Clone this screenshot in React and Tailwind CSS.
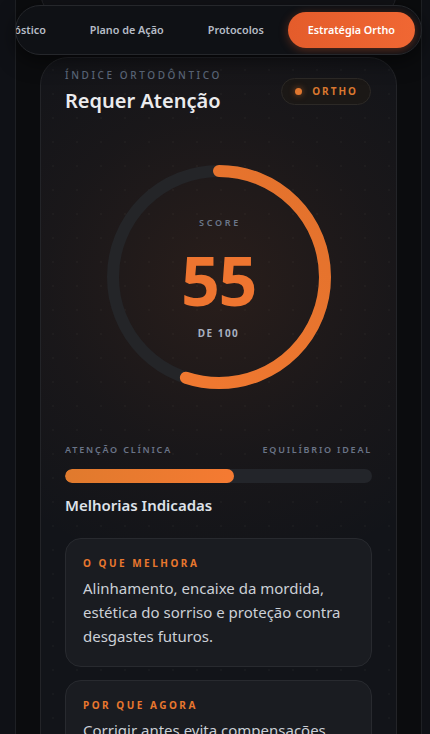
import { useState } from "react";

const tabs = ["Diagnóstico", "Plano de Ação", "Protocolos", "Estratégia Ortho"];

const insights = [
  {
    label: "O QUE MELHORA",
    text: "Alinhamento, encaixe da mordida, estética do sorriso e proteção contra desgastes futuros.",
  },
  {
    label: "POR QUE AGORA",
    text: "Corrigir antes evita compensações musculares, desgaste irregular e tratamentos mais longos no futuro.",
  },
];

function ScoreRing({ score }) {
  const r = 106;
  const c = 2 * Math.PI * r;
  return (
    <div className="relative w-[224px] h-[224px] mx-auto">
      <svg width="224" height="224" viewBox="0 0 224 224" className="-rotate-90">
        <defs>
          <linearGradient id="ring" x1="0" y1="0" x2="1" y2="1">
            <stop offset="0%" stopColor="#f37a31" />
            <stop offset="100%" stopColor="#e2712c" />
          </linearGradient>
        </defs>
        <circle cx="112" cy="112" r={r} fill="none" stroke="#242528" strokeWidth="12" />
        <circle
          cx="112"
          cy="112"
          r={r}
          fill="none"
          stroke="url(#ring)"
          strokeWidth="12"
          strokeLinecap="round"
          strokeDasharray={c}
          strokeDashoffset={c * (1 - score / 100)}
        />
      </svg>
      <div className="absolute inset-0 flex flex-col items-center justify-center">
        <span className="text-[9px] font-semibold tracking-[0.3em] text-[#6b778a] mt-[3px] ml-[3px]">SCORE</span>
        <span className="text-[68px] leading-none font-bold text-[#ee7530] tracking-[-0.02em] mt-[17px]">{score}</span>
        <span className="text-[10px] font-bold tracking-[0.15em] text-[#a7b1c0] mt-[12px]">DE 100</span>
      </div>
    </div>
  );
}

export default function App() {
  const [active, setActive] = useState(3);
  const score = 55;

  return (
    <div
      className="min-h-screen bg-[#0f1116] overflow-hidden"
      style={{ fontFamily: '"Noto Sans", "Open Sans", sans-serif' }}
    >
      <div className="relative flex flex-col ml-[15px] w-[407px] h-[734px] border-x border-[#1e2024] bg-[#0b0c0e] px-[24px]">
        {/* previous card, scrolled past */}
        <div className="mt-[-60px] h-[80px] shrink-0 rounded-b-[28px] border border-[#232428] bg-[#111216]" />

        {/* tab bar */}
        <div className="absolute top-[5px] left-[-1px] w-[407px] h-[50px] rounded-full border border-[#25272b] bg-[#0f1115] z-10 flex items-center justify-end overflow-hidden px-[6px] shadow-[0_6px_20px_rgba(0,0,0,0.5)]">
          <div className="flex items-center gap-[4px] shrink-0">
            {tabs.map((t, i) => (
              <button
                key={t}
                onClick={() => setActive(i)}
                className={
                  i === active
                    ? "shrink-0 h-[36px] px-[20px] rounded-full bg-gradient-to-r from-[#e45c2b] to-[#f06733] text-white text-[10.8px] font-semibold whitespace-nowrap shadow-[0_2px_10px_rgba(232,95,44,0.35)]"
                    : "shrink-0 h-[36px] px-[20px] rounded-full text-[#b6bcc6] text-[10.8px] font-semibold whitespace-nowrap"
                }
              >
                {t}
              </button>
            ))}
          </div>
        </div>

        {/* score card */}
        <div className="mt-[37px] shrink-0 rounded-[28px] border border-[#232428] bg-[#121419] bg-[radial-gradient(circle_at_50%_225px,rgba(230,110,40,0.11),rgba(230,110,40,0.035)_170px,transparent_300px),radial-gradient(rgba(255,255,255,0.025)_1px,transparent_1px)] bg-[size:auto,24px_24px] px-[24px] pt-[10px] pb-[30px]">
          <div className="flex items-start justify-between">
            <div>
              <p className="text-[10px] font-medium tracking-[0.26em] text-[#5c687a] leading-[14px]">ÍNDICE ORTODÔNTICO</p>
              <h2 className="mt-[6px] text-[20px] font-semibold text-[#ebebed] leading-[26px]">Requer Atenção</h2>
            </div>
            <div className="mt-[10px] mr-[1px] h-[27px] pl-[13px] pr-[12px] rounded-full border border-[#2c2926] bg-[#1b1816] flex items-center gap-[10px]">
              <span className="w-[7px] h-[7px] rounded-full bg-[#e0772f] shadow-[0_0_6px_rgba(224,119,47,0.6)]" />
              <span className="text-[10px] font-bold tracking-[0.2em] text-[#d9772f]">ORTHO</span>
            </div>
          </div>

          <div className="mt-[51px]">
            <ScoreRing score={score} />
          </div>

          <div className="mt-[54px] flex justify-between text-[9px] font-semibold tracking-[0.2em] text-[#6a7487]">
            <span>ATENÇÃO CLÍNICA</span>
            <span>EQUILÍBRIO IDEAL</span>
          </div>
          <div className="mt-[12px] h-[14px] rounded-full bg-[#23252a] overflow-hidden">
            <div
              className="h-full rounded-full bg-gradient-to-r from-[#e07a2d] to-[#f57a32]"
              style={{ width: `${score}%` }}
            />
          </div>

          <h3 className="mt-[11px] text-[15px] font-semibold text-[#dee2e9] leading-[22px]">Melhorias Indicadas</h3>

          <div className="mt-[22px] flex flex-col gap-[13px]">
            {insights.map((it) => (
              <div key={it.label} className="rounded-[16px] border border-[#282a2f] bg-[#1a1c21] px-[17px] pt-[17px] pb-[18px]">
                <p className="text-[10px] font-bold tracking-[0.25em] text-[#e8772e] leading-[14px]">{it.label}</p>
                <p className="mt-[6px] text-[15px] leading-[24px] text-[#ccd0d7]">{it.text}</p>
              </div>
            ))}
          </div>
        </div>
      </div>
    </div>
  );
}
